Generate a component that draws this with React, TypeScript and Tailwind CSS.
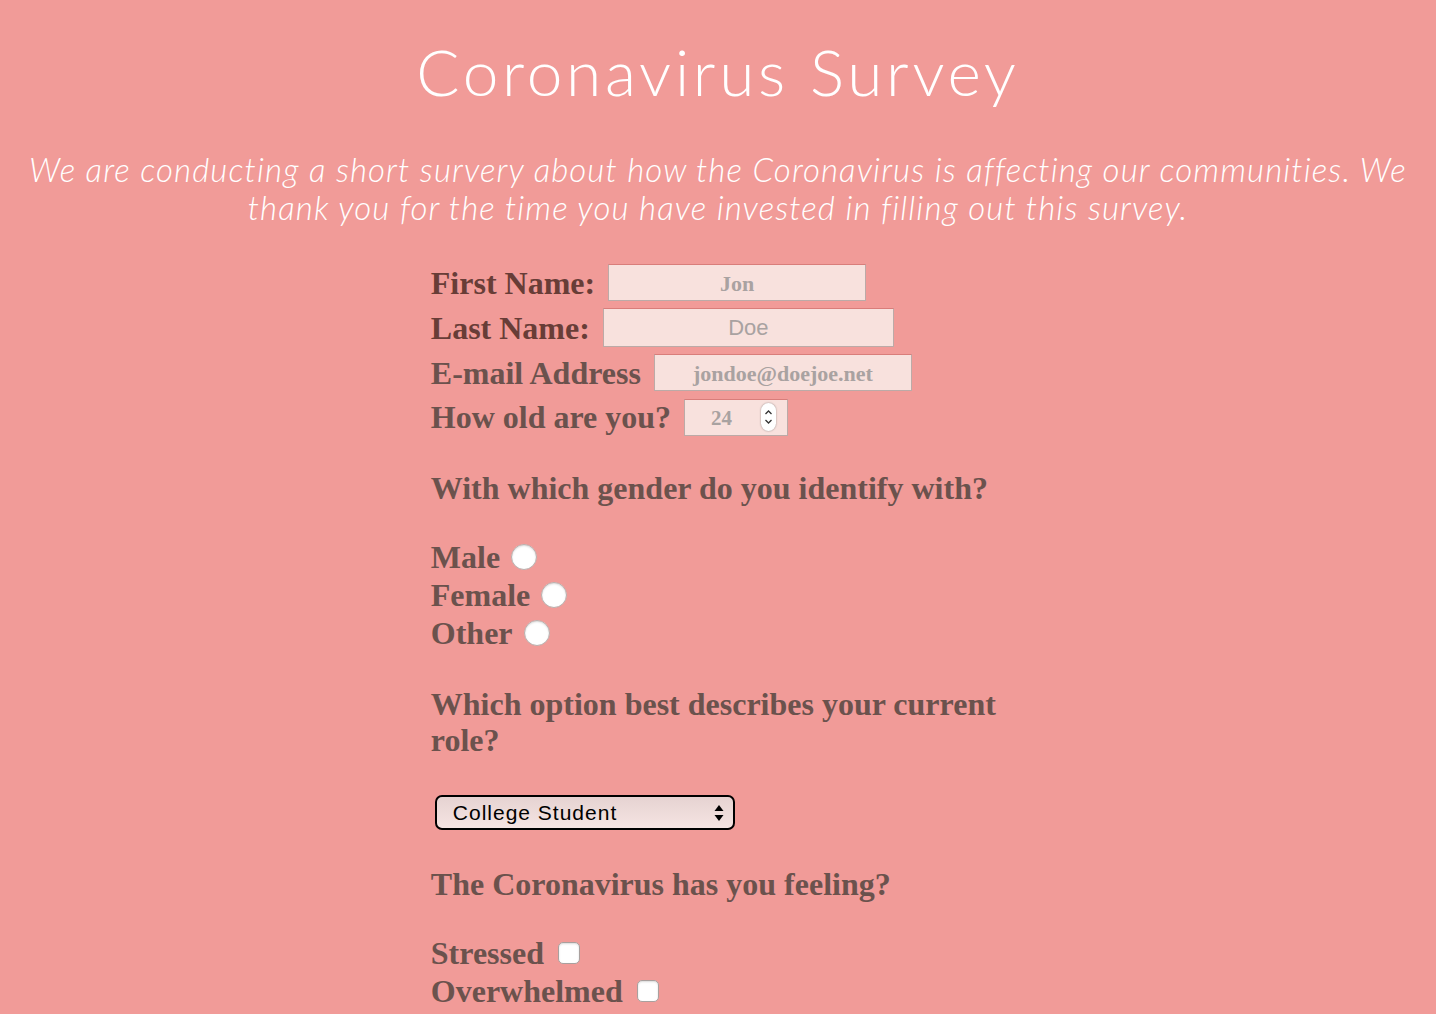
import React from "react";

const serif = { fontFamily: '"Liberation Serif", "Times New Roman", serif' };
const light = { fontFamily: 'Lato, "Noto Sans", sans-serif' };
const sans = { fontFamily: '"Liberation Sans", Arial, sans-serif' };

function Field({ w, h, children, font }: { w: string; h: string; children: React.ReactNode; font?: "serif" | "sans" }) {
  return (
    <div
      className={`${w} ${h} flex items-center justify-center bg-[#f8e1dd] border border-[#bcaaa7] border-t-[#d97d7a] text-[#a9a2a1]`}
      style={font === "sans" ? sans : serif}
    >
      {children}
    </div>
  );
}

function Radio() {
  return (
    <span className="inline-block w-[26px] h-[26px] rounded-full bg-white border border-[#b9b0ae] shadow-[inset_0_1px_2px_rgba(0,0,0,0.15)]" />
  );
}

function Check() {
  return (
    <span className="inline-block w-[22px] h-[22px] rounded-[5px] bg-white border border-[#a9a09e] shadow-[inset_0_1px_2px_rgba(0,0,0,0.15)]" />
  );
}

export default function App() {
  return (
    <div className="min-h-[1014px] w-full bg-[#f19b98] overflow-hidden">
      <h1
        className="text-center text-white text-[64px] leading-[76px] font-light pt-[34px] tracking-[3.7px]"
        style={light}
      >
        Coronavirus Survey
      </h1>
      <p
        className="mt-[40px] px-[14px] text-center text-white text-[33px] leading-[38px] italic font-light tracking-[1.1px]"
        style={light}
      >
        We are conducting a short survery about how the Coronavirus is affecting our communities. We thank you for the
        time you have invested in filling out this survey.
      </p>

      <div className="w-[40%] mx-auto mt-[38px] text-[#6b524d] font-bold text-[32px]" style={serif}>
        <div className="flex items-center gap-[13px] h-[37px]">
          <span className="leading-[32px] text-[#683d37]">First Name:</span>
          <Field w="w-[258px]" h="h-[37px]">
            <span className="text-[22px] font-bold pt-[2px]">Jon</span>
          </Field>
        </div>
        <div className="flex items-center gap-[13px] h-[39px] mt-[7px]">
          <span className="leading-[32px] text-[#683d37]">Last Name:</span>
          <Field w="w-[291px]" h="h-[39px]" font="sans">
            <span className="text-[22px] font-normal">Doe</span>
          </Field>
        </div>
        <div className="flex items-center gap-[13px] h-[37px] mt-[7px]">
          <span className="leading-[32px]">E-mail Address</span>
          <Field w="w-[258px]" h="h-[37px]">
            <span className="text-[22px] font-bold pt-[2px]">jondoe@doejoe.net</span>
          </Field>
        </div>
        <div className="flex items-center gap-[13px] h-[36px] mt-[8px]">
          <span className="leading-[32px]">How old are you?</span>
          <div className="relative w-[104px] h-[37px] bg-[#f8e1dd] border border-[#bcaaa7] border-t-[#d97d7a] text-[#a9a2a1] flex items-center">
            <span className="text-[21px] font-bold pl-[26px] pt-[3px]">24</span>
            <span className="absolute left-[76px] top-[3px] w-[15px] h-[28px] rounded-full bg-white shadow-[0_0_2px_rgba(0,0,0,0.4)] flex items-center justify-center">
              <svg width="9" height="20" viewBox="0 0 9 20" fill="none" stroke="#333" strokeWidth="1.3">
                <path d="M1.5 7 L4.5 4 L7.5 7" />
                <path d="M1.5 13 L4.5 16 L7.5 13" />
              </svg>
            </span>
          </div>
        </div>

        <div className="mt-[35px] leading-[36px]">With which gender do you identify with?</div>

        <div className="mt-[32px] leading-[38px]">
          <div className="flex items-center gap-[11px]">
            <span>Male</span>
            <Radio />
          </div>
          <div className="flex items-center gap-[11px]">
            <span>Female</span>
            <Radio />
          </div>
          <div className="flex items-center gap-[11px]">
            <span>Other</span>
            <Radio />
          </div>
        </div>

        <div className="mt-[34px] leading-[36px]">Which option best describes your current role?</div>

        <div
          className="mt-[37px] ml-[4px] w-[300px] h-[35px] rounded-[7px] border-2 border-black bg-gradient-to-b from-[#e6d3d2] to-[#f5e4e2] flex items-center justify-between pl-[16px] pr-[9px] text-black font-normal text-[21px] tracking-[1px]"
          style={sans}
        >
          <span>College Student</span>
          <svg width="10" height="18" viewBox="0 0 10 18" fill="#000">
            <path d="M5 1 L9.5 7 L0.5 7 Z" />
            <path d="M5 17 L9.5 11 L0.5 11 Z" />
          </svg>
        </div>

        <div className="mt-[36px] leading-[36px]">The Coronavirus has you feeling?</div>

        <div className="mt-[32px] leading-[38px]">
          <div className="flex items-center gap-[14px]">
            <span>Stressed</span>
            <Check />
          </div>
          <div className="flex items-center gap-[14px]">
            <span>Overwhelmed</span>
            <Check />
          </div>
        </div>
      </div>
    </div>
  );
}
